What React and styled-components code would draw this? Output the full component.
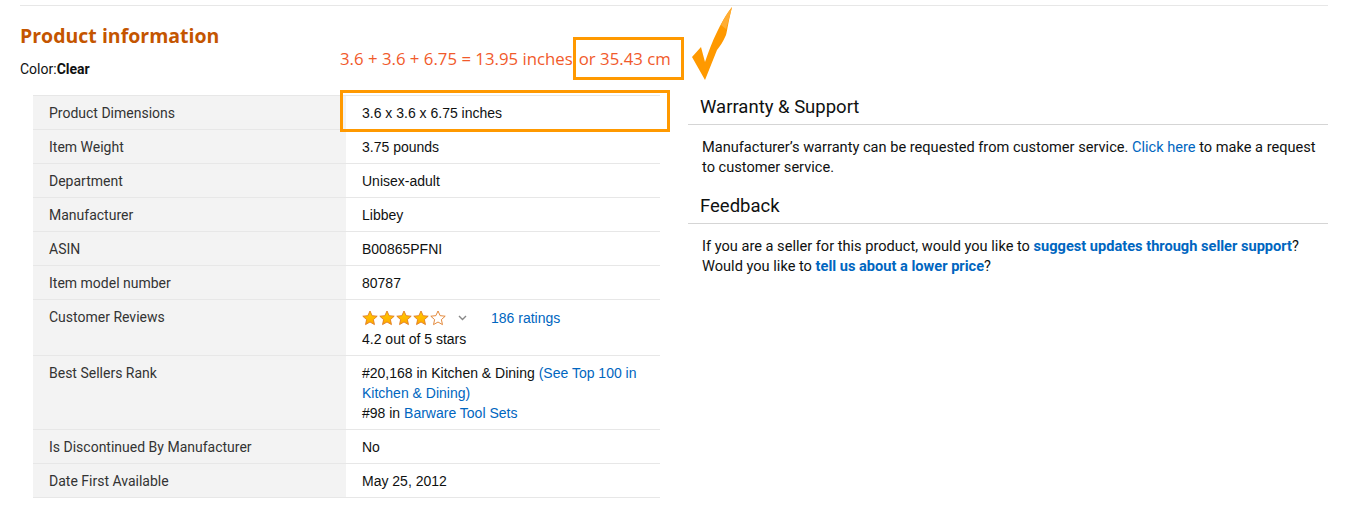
import React from "react";
import styled, { createGlobalStyle } from "styled-components";

const Global = createGlobalStyle`
  body {
    margin: 0;
    background: #fff;
    font-family: Roboto, "Liberation Sans", Arial, sans-serif;
    color: #0f1111;
  }
`;

const Page = styled.div`
  padding: 5px 21px 30px 20px;
`;

const Rule = styled.div`
  border-top: 1px solid #e7e7e7;
`;

const Header = styled.div`
  position: relative;
  padding-top: 18px;
`;

const Title = styled.h2`
  margin: 0;
  font-family: "Open Sans", Roboto, sans-serif;
  font-size: 19.5px;
  line-height: 24px;
  font-weight: 700;
  color: #c45500;
`;

const ColorLine = styled.div`
  margin-top: 12px;
  font-size: 14px;
  line-height: 19px;
  color: #0f1111;
  b { font-weight: 700; }
`;

const Annotation = styled.div`
  position: absolute;
  left: 320px;
  top: 31px;
  display: flex;
  align-items: center;
  font-family: "Open Sans", "Liberation Sans", sans-serif;
  font-size: 16.8px;
  line-height: 21px;
  font-weight: 500;
  color: #f15a2b;
  white-space: nowrap;
`;

const Boxed = styled.span`
  border: 3px solid #ff9900;
  padding: 8px 10px 8px 3px;
`;

const Check = styled.svg`
  position: absolute;
  left: 348px;
  top: -32px;
`;

const Body = styled.div`
  display: flex;
  align-items: flex-start;
  gap: 28px;
  margin-top: 16px;
`;

const Table = styled.div`
  margin-left: 13px;
  width: 627px;
  border-top: 1px solid #e7e7e7;
  flex-shrink: 0;
`;

const Row = styled.div`
  display: grid;
  grid-template-columns: 313px 314px;
  border-bottom: 1px solid #e7e7e7;
`;

const Label = styled.div`
  background: #f3f3f3;
  padding: 7px 16px 6px;
  font-size: 14px;
  line-height: 20px;
  color: #333;
`;

const Value = styled.div`
  position: relative;
  padding: 7px 16px 6px;
  font-family: "Liberation Sans", Arial, sans-serif;
  font-size: 14px;
  line-height: 20px;
  color: #0f1111;
  ${(p) =>
    p.$highlight &&
    `
    &::after {
      content: "";
      position: absolute;
      left: -6px;
      right: -10px;
      top: -6px;
      bottom: -3px;
      border: 3px solid #ff9900;
      pointer-events: none;
    }
  `}
`;

const Link = styled.a`
  color: #0066c0;
  text-decoration: none;
  font-weight: ${(p) => (p.$bold ? 700 : 400)};
`;

const StarLine = styled.div`
  display: flex;
  align-items: center;
  height: 22px;
`;

const Stars = styled.span`
  display: flex;
  gap: 1px;
`;

const Caret = styled.svg`
  margin: 0 24px 0 12px;
`;

const Side = styled.div`
  flex: 1;
`;

const SideHeading = styled.h3`
  margin: ${(p) => (p.$first ? "0" : "17px")} 0 0;
  padding: 0 12px 5px;
  font-size: 18.5px;
  line-height: 24px;
  font-weight: 400;
  color: #0f1111;
  border-bottom: 1px solid #d5d5d5;
`;

const SideText = styled.p`
  margin: 12px 0 0;
  padding: 0 6px 0 14px;
  font-size: 14.6px;
  line-height: 20px;
  color: #0f1111;
`;

const Star = ({ filled }) => (
  <svg width="16" height="16" viewBox="0 0 24 24">
    <defs>
      <linearGradient id="sg" x1="0" y1="0" x2="0" y2="1">
        <stop offset="0" stopColor="#ffce00" />
        <stop offset="1" stopColor="#ffa700" />
      </linearGradient>
    </defs>
    <path
      d="M12 1.5l3.2 7 7.6.8-5.7 5.1 1.6 7.5L12 18l-6.7 3.9 1.6-7.5-5.7-5.1 7.6-.8z"
      fill={filled ? "url(#sg)" : "#fff"}
      stroke="#de7921"
      strokeWidth="1.3"
      strokeLinejoin="round"
    />
  </svg>
);

const rows = [
  ["Product Dimensions", "3.6 x 3.6 x 6.75 inches", true],
  ["Item Weight", "3.75 pounds"],
  ["Department", "Unisex-adult"],
  ["Manufacturer", "Libbey"],
  ["ASIN", "B00865PFNI"],
  ["Item model number", "80787"],
];

export default function App() {
  return (
    <Page>
      <Global />
      <Rule />
      <Header>
        <Title>Product information</Title>
        <ColorLine>
          Color:<b>Clear</b>
        </ColorLine>
        <Annotation>
          <span>3.6 + 3.6 + 6.75 = 13.95 inches</span>
          <Boxed>or 35.43 cm</Boxed>
          <Check width="50" height="80" viewBox="0 0 50 80">
            <path
              d="M4 52 L13 42 L17 57 C24 36 33 16 44 2 C41 14 39 26 38 30 C35 37 32 41 29 45 L17 75 Z"
              fill="#ff9900"
            />
            <path d="M33 20 C36 13 40 7 44 2 C42 10 40 18 38 24 Z" fill="#ffad33" />
          </Check>
        </Annotation>
      </Header>
      <Body>
        <Table>
          {rows.map(([k, v, hl]) => (
            <Row key={k}>
              <Label>{k}</Label>
              <Value $highlight={hl}>{v}</Value>
            </Row>
          ))}
          <Row>
            <Label>Customer Reviews</Label>
            <Value>
              <StarLine>
                <Stars>
                  <Star filled />
                  <Star filled />
                  <Star filled />
                  <Star filled />
                  <Star />
                </Stars>
                <Caret width="9" height="6" viewBox="0 0 9 6">
                  <path d="M1 1l3.5 3.5L8 1" fill="none" stroke="#888" strokeWidth="1.4" />
                </Caret>
                <Link href="#">186 ratings</Link>
              </StarLine>
              <div>4.2 out of 5 stars</div>
            </Value>
          </Row>
          <Row>
            <Label>Best Sellers Rank</Label>
            <Value>
              #20,168 in Kitchen &amp; Dining{" "}
              <Link href="#">(See Top 100 in Kitchen &amp; Dining)</Link>
              <br />
              #98 in <Link href="#">Barware Tool Sets</Link>
            </Value>
          </Row>
          <Row>
            <Label>Is Discontinued By Manufacturer</Label>
            <Value>No</Value>
          </Row>
          <Row>
            <Label>Date First Available</Label>
            <Value>May 25, 2012</Value>
          </Row>
        </Table>
        <Side>
          <SideHeading $first>Warranty &amp; Support</SideHeading>
          <SideText>
            Manufacturer’s warranty can be requested from customer service.{" "}
            <Link href="#">Click here</Link> to make a request to customer service.
          </SideText>
          <SideHeading>Feedback</SideHeading>
          <SideText>
            If you are a seller for this product, would you like to{" "}
            <Link href="#" $bold>suggest updates through seller support</Link>?
            Would you like to <Link href="#" $bold>tell us about a lower price</Link>?
          </SideText>
        </Side>
      </Body>
    </Page>
  );
}
